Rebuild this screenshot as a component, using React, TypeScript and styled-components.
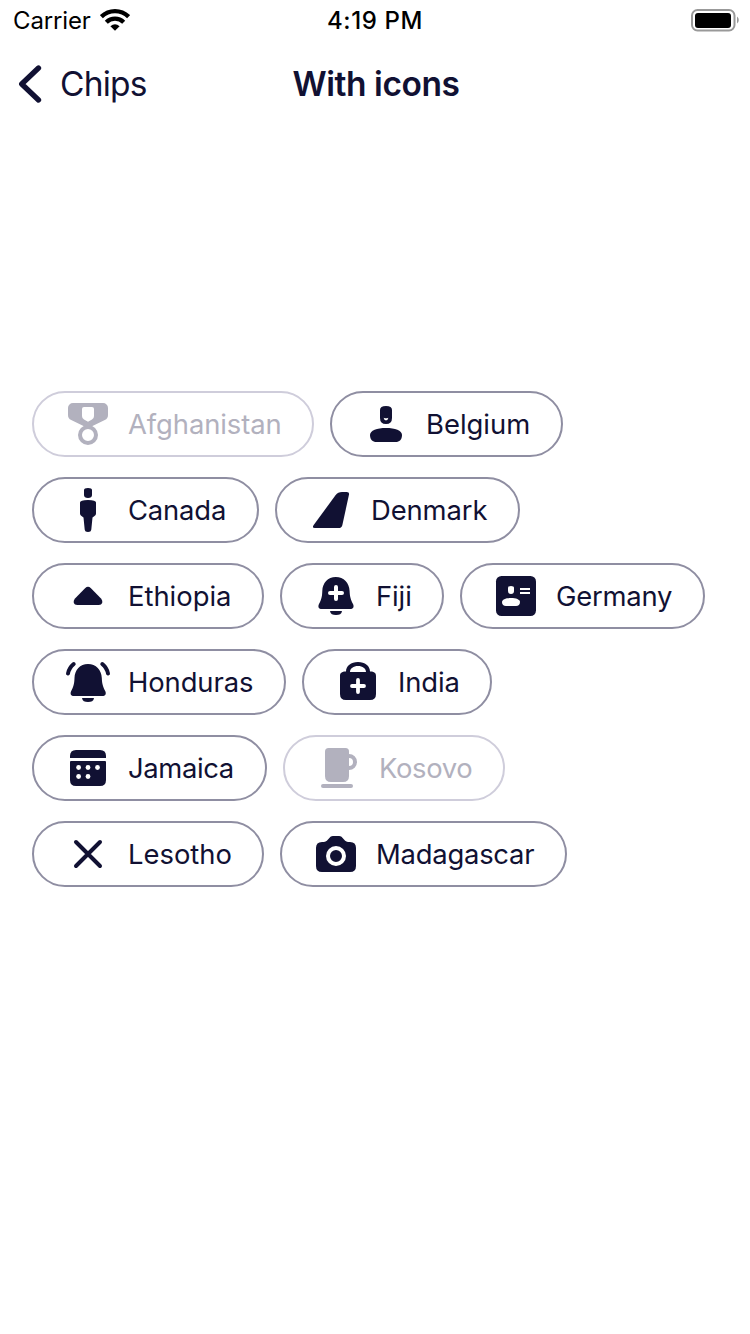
import React from "react";
import styled, { createGlobalStyle } from "styled-components";

const Global = createGlobalStyle`
  * { box-sizing: border-box; }
  body { margin: 0; background: #fff; }
`;

const Screen = styled.div`
  width: 750px;
  height: 1334px;
  overflow: hidden;
  background: #fff;
  color: #111133;
  font-family: Inter, "Liberation Sans", sans-serif;
  display: flex;
  flex-direction: column;
`;

const StatusBar = styled.header`
  height: 40px;
  padding: 0 11px 0 13px;
  display: grid;
  grid-template-columns: 1fr auto 1fr;
  align-items: center;
  color: #000;
  font-size: 24px;
  line-height: 39px;
`;

const Carrier = styled.div`
  display: flex;
  align-items: center;
  gap: 9px;
`;

const Label = styled.span<{ $spacing?: number }>`
  padding-top: 1px;
  white-space: nowrap;
  letter-spacing: ${(p) => p.$spacing ?? 0}px;
`;

const Time = styled(Label)`
  margin-right: 2px;
  font-weight: 550;
`;

const Battery = styled.svg`
  justify-self: end;
`;

const NavBar = styled.nav`
  height: 88px;
  padding: 0 18px;
  display: grid;
  grid-template-columns: 1fr auto 1fr;
  align-items: center;
  font-size: 33.5px;
  line-height: 87px;
`;

const BackButton = styled.div`
  display: flex;
  align-items: center;
  gap: 18px;
`;

const Title = styled(Label)`
  margin-left: 2px;
  font-weight: 600;
`;

const ChipList = styled.main`
  margin-top: 263px;
  padding: 0 32px;
  display: flex;
  flex-direction: column;
  gap: 20px;
`;

const ChipRow = styled.div`
  display: flex;
  gap: 16px;
`;

const ChipBox = styled.div<{ $width: number; $disabled?: boolean }>`
  width: ${(p) => p.$width}px;
  height: 66px;
  padding-left: 30px;
  border: 2px solid ${(p) => (p.$disabled ? "#cfcddb" : "#8f8ea2")};
  border-radius: 33px;
  color: ${(p) => (p.$disabled ? "#b2b1be" : "#111133")};
  display: flex;
  align-items: center;
  gap: 16px;
  font-size: 27.4px;
  line-height: 61px;
`;

const Glyph = styled.svg`
  width: 48px;
  height: 48px;
  flex: none;
  fill: currentColor;
`;

const bell =
  "M24 6C16 6 10.700 12 10.500 20C10.300 26 9.500 28.500 7.200 33C5.800 36 7 38 10 38H38.300C41.300 38 42.600 36 41.200 33C39 28.500 38 26 37.800 20C37.500 12 32 6 24 6Z";

const icons: Record<string, React.ReactNode> = {
  medal: (
    <>
      <path
        fillRule="evenodd"
        d="M9 3H39A5 5 0 0 1 44 8V15C44 17.500 43 19 40.800 20.100L28.500 26H19.500L7.200 20.100C5 19 4 17.500 4 15V8A5 5 0 0 1 9 3ZM20 7Q18 7 18 9V16Q18 18.500 20 19.600L24 21.800L28 19.600Q30 18.500 30 16V9Q30 7 28 7Z"
      />
      <circle cx="24" cy="35" r="8" fill="none" stroke="currentColor" strokeWidth="4" />
    </>
  ),
  person: (
    <>
      <path
        fillRule="evenodd"
        d="M18 10Q18 6 24 6T30 10V18Q30 24 24 24T18 18ZM21.700 17.700C22 21.100 26 21.100 26.300 17.700Q24 18.900 21.700 17.700Z"
      />
      <path d="M8 35C8 30.500 15 28 24 28S40 30.500 40 35C40 39.500 37.500 42 33.500 42H14.500C10.500 42 8 39.500 8 35Z" />
    </>
  ),
  standing: (
    <>
      <path d="M20 4Q20 2 24 2T28 4V9Q28 12 24 12T20 9Z" />
      <path d="M16 16.500Q16 14 24 14T32 16.500V27.500Q32 29 30.500 30L28.500 31.500L27.300 43.500Q27 46 24 46T20.700 43.500L19.500 31.500L17.500 30Q16 29 16 27.500Z" />
    </>
  ),
  tail: <path d="M28.500 9.300Q31 6 35 6H39.800Q42.500 6 42 8.600L35.300 39.200Q34.600 42 31.800 42H7.800Q4.700 42 6.700 39Z" />,
  caret: <path d="M21.300 16Q24 13.500 26.700 16L37 26.500C39.500 29.500 38.200 33 34.800 33H13.200C9.800 33 8.500 29.500 11 26.500Z" />,
  bellPlus: (
    <>
      <path d={bell} transform="translate(-.2 -1.100)" />
      <path d="M18 39H30C29.500 42 27.500 43 24 43S18.500 42 18 39Z" />
      <path d="M24 15V27M18 21H30" stroke="#fff" strokeWidth="4" strokeLinecap="round" />
    </>
  ),
  card: (
    <>
      <rect x="4" y="4" width="40" height="40" rx="5.500" />
      <g fill="#fff">
        <path d="M16 15.700Q16 14 19 14T22 15.700V19Q22 22 19 22T16 19Z" />
        <path d="M10 30C10 27.500 14 26 19 26S28 27.500 28 30C28 32.700 26.500 34 24 34H14C11.500 34 10 32.700 10 30Z" />
        <rect x="28" y="16" width="10" height="2" />
        <rect x="28" y="20" width="10" height="2" />
      </g>
    </>
  ),
  ringing: (
    <>
      <path d={bell} />
      <path d="M18 40H30C29.500 43 27.500 44 24 44S18.500 43 18 40Z" />
      <path
        d="M4 15.500Q5 10 9.700 6M44 15.500Q43 10 38.300 6"
        fill="none"
        stroke="currentColor"
        strokeWidth="4"
        strokeLinecap="round"
      />
    </>
  ),
  firstAid: (
    <>
      <path
        fillRule="evenodd"
        d="M12 13.500C12 8 17 4 24 4S36 8 36 13.500C40.500 13.500 42 15 42 18V36Q42 42 36 42H12Q6 42 6 36V18C6 15 7.500 13.500 12 13.500ZM16 14H32C32 10.500 28.500 8 24 8S16 10.500 16 14Z"
      />
      <path d="M24 22V34M18 28H30" stroke="#fff" strokeWidth="3.800" strokeLinecap="round" />
    </>
  ),
  calendar: (
    <>
      <path d="M6 14V12Q6 6 12 6H36Q42 6 42 12V14Z" />
      <path d="M7 17H41Q42 17 42 18V36Q42 42 36 42H12Q6 42 6 36V18Q6 17 7 17Z" />
      <g fill="#fff">
        <circle cx="14.600" cy="23.500" r="2.400" />
        <circle cx="24" cy="23.500" r="2.400" />
        <circle cx="33.500" cy="23.500" r="2.400" />
        <circle cx="14.600" cy="32.500" r="2.400" />
        <circle cx="24" cy="32.500" r="2.400" />
      </g>
    </>
  ),
  cup: (
    <>
      <path d="M13.500 4H30.500Q34 4 34 7.500V32Q34 38 28 38H16Q10 38 10 32V7.500Q10 4 13.500 4Z" />
      <path d="M33 12H34A6 6 0 0 1 34 24H33" fill="none" stroke="currentColor" strokeWidth="4" />
      <rect x="6" y="40" width="32" height="4" rx="2" />
    </>
  ),
  close: <path d="M12 12L36 36M36 12L12 36" stroke="currentColor" strokeWidth="4" strokeLinecap="round" />,
  camera: (
    <>
      <path d="M10 12C13 12 14.500 11.500 16 9.500C18 7 19 6 21 6H27C29 6 30 7 32 9.500C33.500 11.500 35 12 38 12Q44 12 44 18V36Q44 42 38 42H10Q4 42 4 36V18Q4 12 10 12Z" />
      <circle cx="24" cy="26" r="8" fill="none" stroke="#fff" strokeWidth="4" />
    </>
  ),
};

type ChipData = { label: string; icon: string; width: number; spacing?: number; disabled?: boolean };

const rows: ChipData[][] = [
  [
    { label: "Afghanistan", icon: "medal", width: 282, spacing: -0.08, disabled: true },
    { label: "Belgium", icon: "person", width: 233 },
  ],
  [
    { label: "Canada", icon: "standing", width: 227, spacing: -0.15 },
    { label: "Denmark", icon: "tail", width: 245, spacing: -0.1 },
  ],
  [
    { label: "Ethiopia", icon: "caret", width: 232 },
    { label: "Fiji", icon: "bellPlus", width: 164, spacing: -0.1 },
    { label: "Germany", icon: "card", width: 245, spacing: -0.2 },
  ],
  [
    { label: "Honduras", icon: "ringing", width: 254, spacing: -0.1 },
    { label: "India", icon: "firstAid", width: 190, spacing: -0.1 },
  ],
  [
    { label: "Jamaica", icon: "calendar", width: 235, spacing: -0.35 },
    { label: "Kosovo", icon: "cup", width: 222, spacing: -0.35, disabled: true },
  ],
  [
    { label: "Lesotho", icon: "close", width: 232 },
    { label: "Madagascar", icon: "camera", width: 287, spacing: -0.22 },
  ],
];

const Chip = ({ label, icon, width, spacing, disabled }: ChipData) => (
  <ChipBox $width={width} $disabled={disabled}>
    <Glyph viewBox="0 0 48 48">{icons[icon]}</Glyph>
    <Label $spacing={spacing}>{label}</Label>
  </ChipBox>
);

export default function App() {
  return (
    <>
      <Global />
      <Screen>
        <StatusBar>
          <Carrier>
            <Label $spacing={-0.15}>Carrier</Label>
            <svg width="30" height="22" viewBox="0 0 30 22" fill="none" stroke="#000">
              <path d="M1.400 7.700C9 .300 21 .300 28.600 7.700" strokeWidth="4.300" />
              <path d="M6.300 13.200C11.200 8.400 18.800 8.400 23.700 13.200" strokeWidth="4.300" />
              <path d="M10.400 17.300Q15 13.400 19.600 17.300L15 21.800Z" fill="#000" stroke="none" />
            </svg>
          </Carrier>
          <Time $spacing={0.6}>4:19 PM</Time>
          <Battery width="48" height="24" viewBox="0 0 48 24">
            <rect x="1" y="2" width="42.500" height="20.500" rx="5.500" fill="none" stroke="#999" strokeWidth="2" />
            <rect x="4" y="5" width="36" height="15" rx="3" fill="#000" />
            <path d="M46 8.500Q47.800 9.500 47.800 12T46 15.500Z" fill="#999" />
          </Battery>
        </StatusBar>
        <NavBar>
          <BackButton>
            <svg width="24" height="40" viewBox="0 0 24 40" fill="none">
              <path d="M20.500 4L3.700 20L20.500 36" stroke="#111133" strokeWidth="5.300" strokeLinecap="round" strokeLinejoin="round" />
            </svg>
            <Label $spacing={-0.8}>Chips</Label>
          </BackButton>
          <Title $spacing={-0.45}>With icons</Title>
        </NavBar>
        <ChipList>
          {rows.map((row, i) => (
            <ChipRow key={i}>
              {row.map((chip) => (
                <Chip key={chip.label} {...chip} />
              ))}
            </ChipRow>
          ))}
        </ChipList>
      </Screen>
    </>
  );
}
